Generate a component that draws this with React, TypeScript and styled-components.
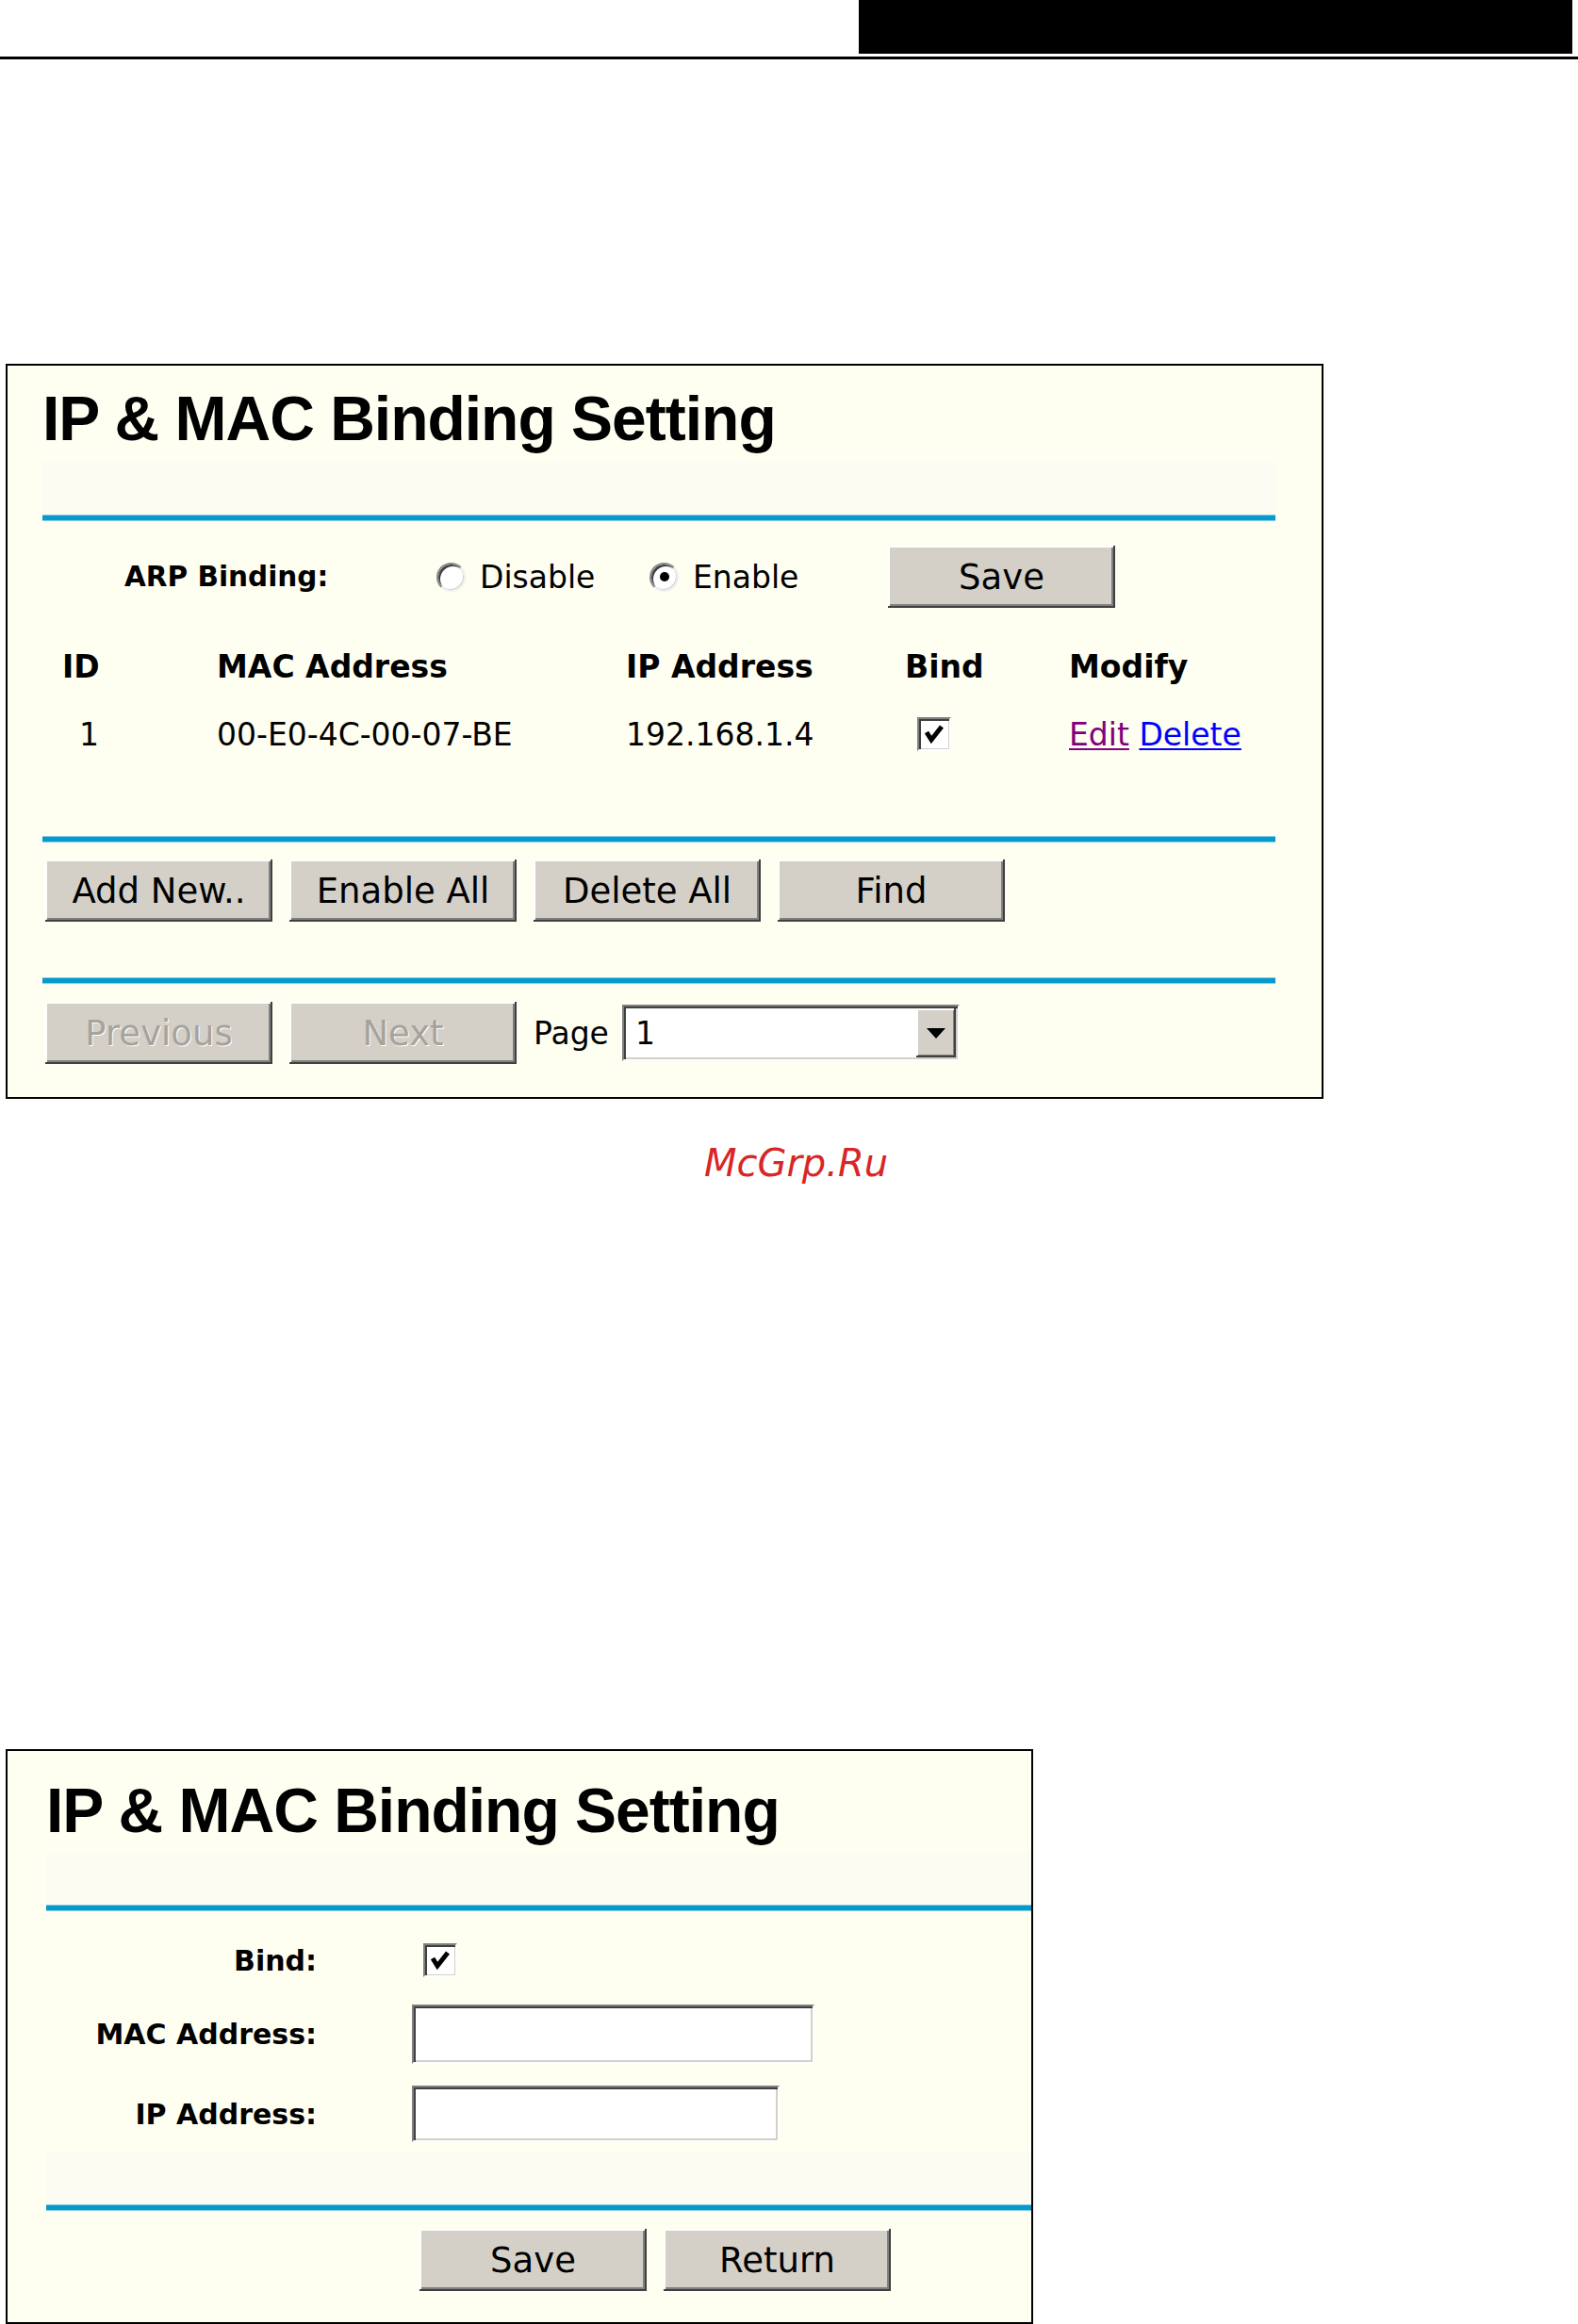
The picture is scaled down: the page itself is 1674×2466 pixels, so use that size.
import React from "react";
import styled, { createGlobalStyle } from "styled-components";

const GlobalStyle = createGlobalStyle`
  html, body {
    margin: 0;
    padding: 0;
    background: #ffffff;
  }
  body {
    font-family: "DejaVu Sans", Verdana, sans-serif;
    color: #000;
  }
  * {
    box-sizing: border-box;
  }
`;

const Page = styled.div`
  width: 1674px;
`;

const TopBar = styled.header`
  display: flex;
  justify-content: flex-end;
  height: 57px;
  padding-right: 6px;
`;

const BlackTab = styled.div`
  width: 757px;
  background: #000;
`;

const TopRule = styled.div`
  margin-top: 3px;
  height: 3px;
  background: #000;
`;

const Panel = styled.section<{
  $width: number;
  $top: number;
  $padTop: number;
  $padBottom: number;
  $padLeft: number;
  $padRight: number;
}>`
  margin: ${(p) => p.$top}px 0 0 6px;
  width: ${(p) => p.$width}px;
  border: 2px solid #000;
  background: #fefef1;
  padding: ${(p) => p.$padTop}px ${(p) => p.$padRight}px
    ${(p) => p.$padBottom}px ${(p) => p.$padLeft}px;
`;

const Title = styled.h1`
  margin: 0;
  font-family: "Liberation Sans", Arial, sans-serif;
  font-weight: 700;
  font-size: 66px;
  line-height: 66px;
  letter-spacing: -1px;
  white-space: nowrap;
`;

const Band = styled.div<{ $top: number; $h: number }>`
  margin-top: ${(p) => p.$top}px;
  height: ${(p) => p.$h}px;
  background: #fcfcf3;
`;

const BlueRule = styled.div<{ $top?: number }>`
  margin-top: ${(p) => p.$top ?? 0}px;
  height: 5px;
  background: #0799cb;
  box-shadow: 0 -1px 0 #86cfe7, 0 1px 0 #86cfe7;
`;

const ArpRow = styled.div`
  display: flex;
  align-items: center;
  height: 66px;
  margin-top: 27px;
  padding-left: 87px;
`;

const ArpLabel = styled.div`
  width: 331px;
  font-weight: 700;
  font-size: 29.5px;
`;

const RadioOption = styled.label<{ $w: number }>`
  display: flex;
  align-items: center;
  gap: 15px;
  width: ${(p) => p.$w}px;
  font-size: 33px;
`;

const Radio = styled.span<{ $checked?: boolean }>`
  display: flex;
  align-items: center;
  justify-content: center;
  width: 31px;
  height: 31px;
  border-radius: 50%;
  background: #fff;
  border: 2px solid;
  border-color: #8a8a8a #f0f0f0 #f0f0f0 #8a8a8a;
  box-shadow: inset 2px 2px 0 #404040, inset -1px -1px 0 #d4d0c8;
  &::after {
    content: "";
    display: ${(p) => (p.$checked ? "block" : "none")};
    width: 10px;
    height: 10px;
    border-radius: 50%;
    background: #000;
  }
`;

const Button = styled.button<{ $w?: number; $disabled?: boolean }>`
  width: ${(p) => p.$w ?? 241}px;
  height: 66px;
  padding: 0;
  border: none;
  background: #d4d0c8;
  box-shadow: inset -2px -2px 0 #404040, inset 2px 2px 0 #ffffff,
    inset -4px -4px 0 #808080;
  font-family: "DejaVu Sans", Verdana, sans-serif;
  font-size: 37px;
  color: ${(p) => (p.$disabled ? "#a6a39c" : "#000")};
  text-shadow: ${(p) => (p.$disabled ? "1px 1px 0 #ffffff" : "none")};
`;

const Table = styled.div`
  display: grid;
  grid-template-columns: 185px 434px 296px 174px 219px;
  grid-auto-rows: 72px;
  align-items: center;
  margin-top: 26px;
`;

const HeadCell = styled.div<{ $indent?: number }>`
  padding-left: ${(p) => p.$indent ?? 0}px;
  font-weight: 700;
  font-size: 33px;
  white-space: nowrap;
`;

const Cell = styled.div<{ $indent?: number }>`
  display: flex;
  align-items: center;
  padding-left: ${(p) => p.$indent ?? 0}px;
  font-size: 33px;
  white-space: nowrap;
`;

const Link = styled.a<{ $visited?: boolean }>`
  color: ${(p) => (p.$visited ? "#800080" : "#0000ff")};
  text-decoration: underline;
  text-underline-offset: 3px;
  text-decoration-thickness: 2px;
`;

const Check = styled.span`
  display: inline-flex;
  width: 36px;
  height: 36px;
  background: #fff;
  border: 2px solid;
  border-color: #808080 #ffffff #ffffff #808080;
  box-shadow: inset 2px 2px 0 #404040, inset -1px -1px 0 #d4d0c8;
`;

const ButtonRow = styled.div<{ $top: number; $indent: number }>`
  display: flex;
  align-items: center;
  gap: 18px;
  margin-top: ${(p) => p.$top}px;
  padding-left: ${(p) => p.$indent}px;
`;

const PageGroup = styled.div`
  display: flex;
  align-items: center;
  gap: 14px;
  font-size: 33px;
`;

const Select = styled.div`
  display: flex;
  width: 358px;
  height: 60px;
  background: #fff;
  border: 2px solid;
  border-color: #808080 #ffffff #ffffff #808080;
  box-shadow: inset 2px 2px 0 #404040, inset -2px -2px 0 #d4d0c8;
  padding: 2px;
`;

const SelectValue = styled.div`
  flex: 1;
  display: flex;
  align-items: center;
  padding-left: 10px;
  font-size: 33px;
`;

const SelectArrow = styled.div`
  display: flex;
  align-items: center;
  justify-content: center;
  width: 42px;
  background: #d4d0c8;
  box-shadow: inset -2px -2px 0 #404040, inset 2px 2px 0 #ffffff,
    inset -3px -3px 0 #808080;
  &::after {
    content: "";
    width: 0;
    height: 0;
    border-left: 10px solid transparent;
    border-right: 10px solid transparent;
    border-top: 11px solid #000;
  }
`;

const Watermark = styled.div`
  margin-top: 43px;
  padding-left: 15px;
  text-align: center;
  font-family: "DejaVu Sans", Verdana, sans-serif;
  font-style: italic;
  font-size: 40px;
  line-height: 50px;
  color: #d82626;
`;

const FormRow = styled.div<{ $top: number }>`
  display: flex;
  align-items: center;
  margin-top: ${(p) => p.$top}px;
`;

const FormLabel = styled.div`
  width: 287px;
  margin-right: 101px;
  text-align: right;
  font-weight: 700;
  font-size: 30px;
  white-space: nowrap;
`;

const TextInput = styled.div<{ $w: number; $h: number }>`
  width: ${(p) => p.$w}px;
  height: ${(p) => p.$h}px;
  background: #fff;
  border: 2px solid;
  border-color: #808080 #ffffff #ffffff #808080;
  box-shadow: inset 2px 2px 0 #404040, inset -2px -2px 0 #d4d0c8;
`;

function CheckBox({ offset = 0 }: { offset?: number }) {
  return (
    <Check style={offset ? { marginLeft: offset } : undefined}>
      <svg width="32" height="32" viewBox="0 0 32 32">
        <polyline
          points="8,14 13,22 24,8"
          fill="none"
          stroke="#000"
          strokeWidth="5"
          strokeLinejoin="miter"
        />
      </svg>
    </Check>
  );
}

export default function App() {
  return (
    <Page>
      <GlobalStyle />
      <TopBar>
        <BlackTab />
      </TopBar>
      <TopRule />

      <Panel $width={1398} $top={323} $padTop={23} $padBottom={35} $padLeft={37} $padRight={49}>
        <Title>IP &amp; MAC Binding Setting</Title>
        <Band $top={13} $h={57} />
        <BlueRule />

        <ArpRow>
          <ArpLabel>ARP Binding:</ArpLabel>
          <RadioOption $w={226}>
            <Radio />
            Disable
          </RadioOption>
          <RadioOption $w={253}>
            <Radio $checked />
            Enable
          </RadioOption>
          <Button>Save</Button>
        </ArpRow>

        <Table>
          <HeadCell $indent={21}>ID</HeadCell>
          <HeadCell>MAC Address</HeadCell>
          <HeadCell>IP Address</HeadCell>
          <HeadCell>Bind</HeadCell>
          <HeadCell>Modify</HeadCell>

          <Cell $indent={39}>1</Cell>
          <Cell>00-E0-4C-00-07-BE</Cell>
          <Cell>192.168.1.4</Cell>
          <Cell $indent={13}>
            <CheckBox />
          </Cell>
          <Cell>
            <Link $visited>Edit</Link>&nbsp;<Link>Delete</Link>
          </Cell>
        </Table>

        <BlueRule $top={73} />
        <ButtonRow $top={19} $indent={3}>
          <Button>Add New..</Button>
          <Button>Enable All</Button>
          <Button>Delete All</Button>
          <Button>Find</Button>
        </ButtonRow>

        <BlueRule $top={60} />
        <ButtonRow $top={20} $indent={3}>
          <Button $disabled>Previous</Button>
          <Button $disabled>Next</Button>
          <PageGroup>
            Page
            <Select>
              <SelectValue>1</SelectValue>
              <SelectArrow />
            </Select>
          </PageGroup>
        </ButtonRow>
      </Panel>

      <Watermark>McGrp.Ru</Watermark>

      <Panel $width={1090} $top={597} $padTop={30} $padBottom={33} $padLeft={41} $padRight={0}>
        <Title>IP &amp; MAC Binding Setting</Title>
        <Band $top={13} $h={55} />
        <BlueRule />

        <FormRow $top={35}>
          <FormLabel>Bind:</FormLabel>
          <CheckBox offset={12} />
        </FormRow>
        <FormRow $top={29}>
          <FormLabel>MAC Address:</FormLabel>
          <TextInput $w={427} $h={63} />
        </FormRow>
        <FormRow $top={23}>
          <FormLabel>IP Address:</FormLabel>
          <TextInput $w={390} $h={60} />
        </FormRow>

        <Band $top={10} $h={57} />
        <BlueRule />
        <ButtonRow $top={20} $indent={396}>
          <Button>Save</Button>
          <Button>Return</Button>
        </ButtonRow>
      </Panel>
    </Page>
  );
}
